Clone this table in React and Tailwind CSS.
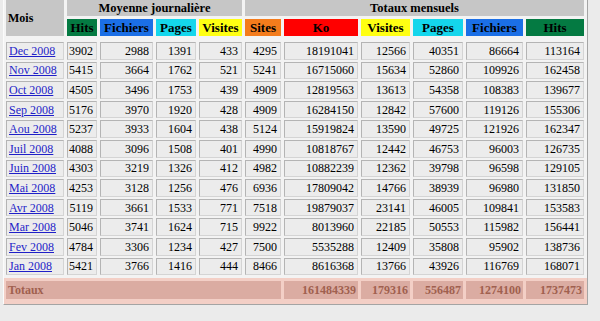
const daily = [
  ['Dec 2008', 3902, 2988, 1391, 433, 4295, 18191041, 12566, 40351, 86664, 113164],
  ['Nov 2008', 5415, 3664, 1762, 521, 5241, 16715060, 15634, 52860, 109926, 162458],
  ['Oct 2008', 4505, 3496, 1753, 439, 4909, 12819563, 13613, 54358, 108383, 139677],
  ['Sep 2008', 5176, 3970, 1920, 428, 4909, 16284150, 12842, 57600, 119126, 155306],
  ['Aou 2008', 5237, 3933, 1604, 438, 5124, 15919824, 13590, 49725, 121926, 162347],
  ['Juil 2008', 4088, 3096, 1508, 401, 4990, 10818767, 12442, 46753, 96003, 126735],
  ['Juin 2008', 4303, 3219, 1326, 412, 4982, 10882239, 12362, 39798, 96598, 129105],
  ['Mai 2008', 4253, 3128, 1256, 476, 6936, 17809042, 14766, 38939, 96980, 131850],
  ['Avr 2008', 5119, 3661, 1533, 771, 7518, 19879037, 23141, 46005, 109841, 153583],
  ['Mar 2008', 5046, 3741, 1624, 715, 9922, 8013960, 22185, 50553, 115982, 156441],
  ['Fev 2008', 4784, 3306, 1234, 427, 7500, 5535288, 12409, 35808, 95902, 138736],
  ['Jan 2008', 5421, 3766, 1416, 444, 8466, 8616368, 13766, 43926, 116769, 168071],
]

const totals = [161484339, 179316, 556487, 1274100, 1737473]

const grid = 'grid grid-cols-[58px_30px_53px_40px_43px_36px_74px_49px_50px_57px_58px] gap-x-[3px]'

const colHeads = [
  ['Hits', 'bg-[#047a42]'],
  ['Fichiers', 'bg-[#1b6fe6]'],
  ['Pages', 'bg-[#14d6ec]'],
  ['Visites', 'bg-[#ffff12]'],
  ['Sites', 'bg-[#f47c1c]'],
  ['Ko', 'bg-[#ff0000]'],
  ['Visites', 'bg-[#ffff12]'],
  ['Pages', 'bg-[#14d6ec]'],
  ['Fichiers', 'bg-[#1b6fe6]'],
  ['Hits', 'bg-[#047a42]'],
]

function Cell({ children }) {
  return (
    <div className="h-[17.6px] flex items-center justify-end pr-[3px] bg-[#ececec] border border-t-[#b4b4b4] border-l-[#b4b4b4] border-r-[#d4d4d4] border-b-[#d4d4d4] text-[12px] text-black leading-none">
      {children}
    </div>
  )
}

export default function App() {
  return (
    <div className="w-[600px] h-[321px] overflow-hidden bg-[#ebebeb] font-['Liberation_Serif','Times_New_Roman',serif]">
      <div className="ml-[3px] w-[585px] bg-[#f3f3f3] border-l border-l-[#fbfbfb] border-r border-r-[#a4a4a4] border-b border-b-[#a4a4a4]">
        <div className={`${grid} grid-rows-[16px_17px] gap-y-[3px] pl-[2px] pr-[3px]`}>
          <div className="row-span-2 bg-[#c6c6c6] flex items-center pl-[2px] text-[12px] font-bold">Mois</div>
          <div className="col-span-4 bg-[#c6c6c6] flex items-center justify-center text-[12.5px] font-bold">Moyenne journalière</div>
          <div className="col-span-6 bg-[#c6c6c6] flex items-center justify-center text-[12.5px] font-bold">Totaux mensuels</div>
          {colHeads.map(([label, bg], i) => (
            <div key={i} className={`${bg} flex items-center justify-center text-[13px] font-bold text-black`}>
              {label}
            </div>
          ))}
        </div>

        <div className={`${grid} gap-y-[2px] pl-[2px] pr-[3px] pt-[6px]`}>
          {daily.map(([month, ...nums]) => (
            <div key={month} className="contents">
              <div className="h-[17.6px] flex items-center pl-[2px] bg-[#ececec] border border-t-[#b4b4b4] border-l-[#b4b4b4] border-r-[#d4d4d4] border-b-[#d4d4d4] text-[12px] leading-none">
                <a href="#" className="text-[#1f1fc8] underline">{month}</a>
              </div>
              {nums.map((n, i) => (
                <Cell key={i}>{n}</Cell>
              ))}
            </div>
          ))}
        </div>

        <div className="mt-[3px] bg-[#f3cfc6] pl-[2px] pr-[3px] pt-[3px] pb-[6px]">
          <div className={`${grid} h-[17px] text-[12px] font-bold text-[#a0604f]`}>
            <div className="col-span-6 bg-[#dbaca2] flex items-center pl-[2px]">Totaux</div>
            {totals.map((t, i) => (
              <div key={i} className="bg-[#dbaca2] flex items-center justify-end pr-[2px]">{t}</div>
            ))}
          </div>
        </div>
      </div>
    </div>
  )
}
